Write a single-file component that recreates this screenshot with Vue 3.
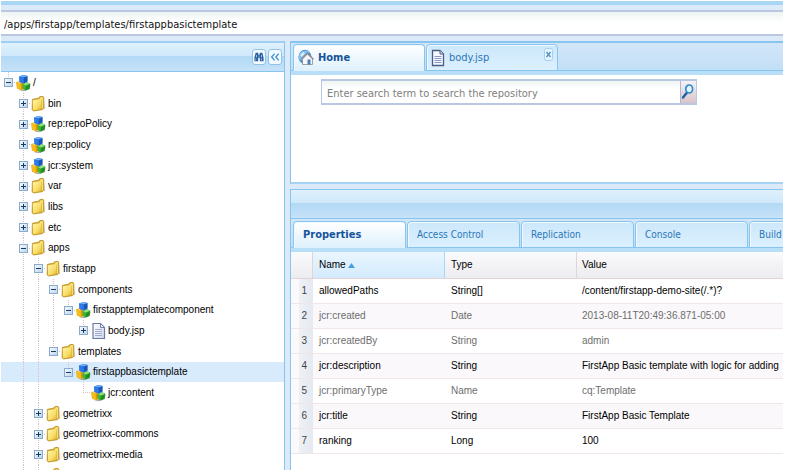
<script setup>
import { ref } from 'vue'

const path = ref('/apps/firstapp/templates/firstappbasictemplate')
const term = ref('')

// guides: columns in which a dotted line passes through the row
const nodes = [
  { name: '/', level: 0, icon: 'cubes', open: true, guides: [] },
  { name: 'bin', level: 1, icon: 'folder', open: false, guides: [1] },
  { name: 'rep:repoPolicy', level: 1, icon: 'cubes', open: false, guides: [1] },
  { name: 'rep:policy', level: 1, icon: 'cubes', open: false, guides: [1] },
  { name: 'jcr:system', level: 1, icon: 'cubes', open: false, guides: [1] },
  { name: 'var', level: 1, icon: 'folder', open: false, guides: [1] },
  { name: 'libs', level: 1, icon: 'folder', open: false, guides: [1] },
  { name: 'etc', level: 1, icon: 'folder', open: false, guides: [1] },
  { name: 'apps', level: 1, icon: 'folder', open: true, guides: [1] },
  { name: 'firstapp', level: 2, icon: 'folder', open: true, guides: [1, 2] },
  { name: 'components', level: 3, icon: 'folder', open: true, guides: [1, 2, 3] },
  { name: 'firstapptemplatecomponent', level: 4, icon: 'cubes', open: true, guides: [1, 2, 3] },
  { name: 'body.jsp', level: 5, icon: 'page', open: false, guides: [1, 2, 3] },
  { name: 'templates', level: 3, icon: 'folder', open: true, guides: [1, 2] },
  { name: 'firstappbasictemplate', level: 4, icon: 'cubes', open: true, guides: [1, 2], selected: true },
  { name: 'jcr:content', level: 5, icon: 'cubes', leaf: true, guides: [1, 2] },
  { name: 'geometrixx', level: 2, icon: 'folder', open: false, guides: [1, 2] },
  { name: 'geometrixx-commons', level: 2, icon: 'folder', open: false, guides: [1, 2] },
  { name: 'geometrixx-media', level: 2, icon: 'folder', open: false, guides: [1, 2] },
  { name: 'geometrixx-outdoors', level: 2, icon: 'folder', open: false, guides: [1, 2] },
]

const detailTabs = ['Properties', 'Access Control', 'Replication', 'Console', 'Build']

const properties = [
  { name: 'allowedPaths', type: 'String[]', value: '/content/firstapp-demo-site(/.*)?' },
  { name: 'jcr:created', type: 'Date', value: '2013-08-11T20:49:36.871-05:00', locked: true },
  { name: 'jcr:createdBy', type: 'String', value: 'admin', locked: true },
  { name: 'jcr:description', type: 'String', value: 'FirstApp Basic template with logic for adding' },
  { name: 'jcr:primaryType', type: 'Name', value: 'cq:Template', locked: true },
  { name: 'jcr:title', type: 'String', value: 'FirstApp Basic Template' },
  { name: 'ranking', type: 'Long', value: '100' },
]
</script>

<template>
  <div class="shell">
    <svg class="defs" width="0" height="0" aria-hidden="true">
      <defs>
        <linearGradient id="gold" x1="0" y1="0" x2="1" y2="1">
          <stop offset="0" stop-color="#fff6ae" />
          <stop offset="0.6" stop-color="#f8de68" />
          <stop offset="1" stop-color="#e0b030" />
        </linearGradient>
        <linearGradient id="sheet" x1="0" y1="0" x2="1" y2="1">
          <stop offset="0" stop-color="#ffffff" />
          <stop offset="1" stop-color="#cfd8ec" />
        </linearGradient>
        <symbol id="folder" viewBox="0 0 16 18">
          <path d="M3 16.5 13.5 15.5 15 14V3.5l-1 12z" fill="#777" opacity="0.5" />
          <path d="M1.5 4 8 2.8 9.2 1.2 12.8.8 13.6 2v11.5L12 15 2.5 16.5 1.2 15z" fill="#d9ae2a" stroke="#b58a1c" stroke-width="0.8" />
          <path d="M9.8 2 12.4 1.6 12.8 2.6v10.6l-1 .8V4.2L9 4.6z" fill="#f7e27c" />
          <path d="M1.9 4.9 11.2 3.6v10.6L2.2 15.6z" fill="url(#gold)" />
        </symbol>
        <symbol id="cubes" viewBox="0 0 16 18">
          <path d="M3 16.5 8 17.8 14.8 15.6 15.6 9.5 14 15z" fill="#555" opacity="0.5" />
          <path d="M.4 8 5.2 7 8 8.4v6.8L5.5 16.6 1 14.8z" fill="#d99a05" />
          <path d="M.4 8 5.2 7 8 8.4 5 9.6z" fill="#ffe27a" />
          <path d="M.4 8 5 9.6 5.4 16.4 1.1 14.6z" fill="#f5bd1c" />
          <path d="M7.2 10.2 11.4 8 15.2 9.8 14.6 14.8 10.2 17 7.4 15z" fill="#218f1d" />
          <path d="M7.2 10.2 11.4 8 15.2 9.8 10.6 11.8z" fill="#8de07e" />
          <path d="M7.2 10.2 10.6 11.8 10.2 17 7.4 15z" fill="#40b837" />
          <path d="M3.4 2 7.6.4 12.4 1.5V7.4L8.4 9.4 3.8 7.8z" fill="#1a55b8" />
          <path d="M3.4 2 7.6.4 12.4 1.5 8.2 3.2z" fill="#6fb0ff" />
          <path d="M3.4 2 8.2 3.2 8.4 9.4 3.8 7.8z" fill="#2b7bea" />
        </symbol>
        <symbol id="page" viewBox="0 0 14 18">
          <path d="M1.5 1.5H9L13 5.5v11H1.5z" fill="url(#sheet)" stroke="#6b7aa5" stroke-width="1.2" />
          <path d="M9 1.5v4h4z" fill="#e9eefa" stroke="#6b7aa5" stroke-width="0.9" />
          <path d="M3.5 7.5h7M3.5 9.5h7M3.5 11.5h7M3.5 13.5h7" stroke="#a3aed0" stroke-width="1" />
        </symbol>
      </defs>
    </svg>

    <header class="top">
      <label class="sr" for="path">Path</label>
      <input id="path" v-model="path" class="path" type="text" />
    </header>

    <div class="work">
      <aside class="explorer">
        <div class="bar">
          <button class="tool" type="button" aria-label="Search">
            <svg width="10" height="12" viewBox="0 0 12 12">
              <path d="M2 1h3v2h2V1h3l1.500 6v4H7V7H5v4H.5V7z" fill="#2c5f9e" />
              <path d="M3 3.5v3M9 3.5v3M2 8v2M9 8v2" stroke="#a9d0f2" stroke-width="1" />
              <path d="M5.5 4h1v2h-1z" fill="#8ab7e2" />
            </svg>
          </button>
          <button class="tool" type="button" aria-label="Collapse">
            <svg width="10" height="12" viewBox="0 0 12 12">
              <path d="M5.5 2 2 6l3.5 4M10.5 2 7 6l3.5 4" fill="none" stroke="#3f93cf" stroke-width="1.6" />
            </svg>
          </button>
        </div>
        <ul class="tree">
          <li v-for="node in nodes" :key="node.name" class="node" :class="{ selected: node.selected }">
            <span v-for="n in node.level" :key="n" class="cell" :class="{ line: node.guides.includes(n - 1) }"></span>
            <span
              class="cell arm"
              :class="{ stem: !node.guides.includes(node.level) }"
            >
              <button v-if="!node.leaf" class="toggle" type="button" :aria-label="node.open ? 'Collapse' : 'Expand'">
                <svg width="9" height="9" viewBox="0 0 9 9">
                  <path d="M2 4.5h5" stroke="#173d66" />
                  <path v-if="!node.open" d="M4.5 2v5" stroke="#173d66" />
                </svg>
              </button>
            </span>
            <svg class="icon" width="15" height="18"><use :href="'#' + node.icon" /></svg>
            <span class="name">{{ node.name }}</span>
          </li>
        </ul>
      </aside>

      <main class="main">
        <section class="editor">
          <nav class="tabs">
            <button class="tab active" type="button">
              <svg width="16" height="18" viewBox="0 0 16 18">
                <ellipse cx="7" cy="8" rx="6.5" ry="7.2" fill="#3c8bd6" />
                <path d="M1.5 5C4 1 9 .5 12 3.5L8 6 6 11 2 11.5C0 9 .5 7 1.5 5z" fill="#7fbdf0" />
                <path d="M2 6l3-3 2 1-3 4z" fill="#d6ecfb" />
                <path d="M4.5 15.5V10L9.5 5l5 5v5.5z" fill="#f6f6f6" stroke="#8a8a8a" stroke-width="0.8" />
                <path d="M3 10.3 9.5 3.8l6 6.5" fill="none" stroke="#8a8a8a" stroke-width="1.2" />
                <path d="M9.5 10.5h3v5h-3z" fill="#4a80bd" />
              </svg>
              <span>Home</span>
            </button>
            <div class="tab">
              <svg width="14" height="18" viewBox="0 0 14 18">
                <path d="M1.5 1.500H9L12.5 5v11.5h-11z" fill="#f5f8ff" stroke="#4d5b84" stroke-width="1.3" />
                <path d="M9 1.5V5h3.5" fill="#c7d2ea" stroke="#4d5b84" />
                <path d="M3.5 7.5h7M3.5 9.5h7M3.5 11.5h7M3.5 13.5h7" stroke="#8b99c2" />
              </svg>
              <button class="caption" type="button">body.jsp</button>
              <button class="close" type="button" aria-label="Close">
                <svg width="9" height="13" viewBox="0 0 9 13">
                  <rect x="0.5" y="0.5" width="8" height="12" rx="2" fill="#e6f4fe" stroke="#a5d0f0" />
                  <path d="M2.5 4 6.5 9M6.5 4 2.5 9" stroke="#5b96c6" stroke-width="1.5" />
                </svg>
              </button>
            </div>
          </nav>
          <form class="search" @submit.prevent>
            <label class="sr" for="term">Search</label>
            <input id="term" v-model="term" type="text" placeholder="Enter search term to search the repository" />
            <button type="submit" aria-label="Search the repository">
              <svg width="14" height="18" viewBox="0 0 14 18">
                <path d="M6 9.5 2 14.5" stroke="#1d5fa8" stroke-width="2.4" stroke-linecap="round" />
                <ellipse cx="8.2" cy="6" rx="3.4" ry="4" fill="#e4f4ff" stroke="#2b8cd0" stroke-width="1.7" />
              </svg>
            </button>
          </form>
        </section>

        <section class="details">
          <div class="bar"></div>
          <nav class="tabs">
            <button v-for="(tab, i) in detailTabs" :key="tab" class="tab" :class="{ active: i === 0 }" type="button">
              {{ tab }}
            </button>
          </nav>
          <table class="grid">
            <thead>
              <tr>
                <th class="num"></th>
                <th class="key sorted">
                  Name
                  <svg width="7" height="5" viewBox="0 0 7 5"><path d="M3.5 0 7 5H0z" fill="#4b9fdc" /></svg>
                </th>
                <th class="kind">Type</th>
                <th>Value</th>
              </tr>
            </thead>
            <tbody>
              <tr v-for="(row, i) in properties" :key="row.name" :class="{ locked: row.locked }">
                <td class="num">{{ i + 1 }}</td>
                <td>{{ row.name }}</td>
                <td>{{ row.type }}</td>
                <td>{{ row.value }}</td>
              </tr>
            </tbody>
          </table>
        </section>
      </main>
    </div>
  </div>
</template>

<style>
body {
  background: #fff;
}
</style>

<style scoped>
* {
  box-sizing: border-box;
}
.shell {
  display: flex;
  flex-direction: column;
  height: 100vh;
  border: solid #fff;
  border-width: 1px 8px 4px 1px;
  background: #dbe9f8;
  font: 10px/20px "Liberation Sans", Arial, sans-serif;
  color: #000;
  overflow: hidden;
}
.defs,
.sr {
  position: absolute;
  width: 1px;
  height: 1px;
  overflow: hidden;
  clip-path: inset(50%);
}
button {
  margin: 0;
  padding: 0;
  border: 0;
  background: none;
  font: inherit;
  color: inherit;
}
svg {
  display: block;
  flex: none;
}
.top {
  border-top: 4px solid #a9d6f5;
  padding: 5px 0;
}
.path {
  display: block;
  width: 100%;
  height: 26px;
  padding: 3px 3px 0;
  border: solid #b9c7e2;
  border-width: 2px 0;
  background: linear-gradient(#edf4f2, #fff 10px);
  font: 11px "DejaVu Sans Condensed", "Open Sans", sans-serif;
  color: #111;
  outline: 0;
}
.work {
  display: flex;
  flex: 1;
  min-height: 0;
  gap: 5px;
}
.explorer {
  display: flex;
  flex-direction: column;
  flex: 0 0 284px;
  border-top: 2px solid #9ccff2;
  border-right: 1px solid #85c5f0;
  background: #fff;
  overflow: hidden;
}
.bar {
  flex: none;
  height: 29px;
  display: flex;
  align-items: center;
  justify-content: flex-end;
  gap: 2px;
  padding-right: 2px;
  border-bottom: 1px solid #85c5f0;
  background: linear-gradient(#dff1fc, #cfe8fa 13px, #b2d9f6 13px, #c6e2f8);
}
.tool {
  display: grid;
  place-items: center;
  width: 14px;
  height: 16px;
  border: 1px solid #8fc4ea;
  border-radius: 3px;
  background: #f2f9ff;
}
.tree {
  margin: 0;
  padding: 0;
  list-style: none;
}
.node {
  display: flex;
  align-items: center;
  height: 21px;
  white-space: nowrap;
}
.node:nth-child(3n) {
  height: 20px;
}
.node.selected {
  background: #d7ebfd;
}
.cell {
  display: grid;
  place-items: center;
  flex: 0 0 15px;
  height: 100%;
  background-repeat: no-repeat;
}
.line {
  background-image: repeating-linear-gradient(#d6bfc6 0 1px, transparent 1px 2px);
  background-size: 1px 100%;
  background-position: 7px 0;
}
.arm {
  background-image:
    repeating-linear-gradient(#d6bfc6 0 1px, transparent 1px 2px),
    repeating-linear-gradient(90deg, #d6bfc6 0 1px, transparent 1px 2px);
  background-size: 1px 100%, 8px 1px;
  background-position: 7px 0, 7px 10px;
}
.stem {
  background-size: 1px 10px, 8px 1px;
}
.toggle {
  width: 9px;
  height: 9px;
  outline: 1px solid #8aabcb;
  outline-offset: -1px;
  background: linear-gradient(135deg, #fff, #b5d0e9);
}
.name {
  padding-left: 2px;
}
.main {
  display: flex;
  flex-direction: column;
  flex: 1;
  min-width: 0;
  gap: 5px;
}
.editor,
.details {
  border: solid #85c5f0;
  border-width: 2px 0 0 1px;
  background: #fff;
}
.editor {
  flex: 0 0 143px;
  border-bottom: 2px solid #a5d3f3;
}
.details {
  flex: 1;
  min-height: 0;
  border-top-width: 1px;
  overflow: hidden;
}
.tabs {
  display: flex;
  height: 32px;
  padding: 1px 2px 0;
  border-bottom: 4px solid #b9dff8;
  background: linear-gradient(#d3e6f8, #c2dff6);
  box-shadow: inset 0 -1px #85c5f0;
  font: 11px/20px "DejaVu Sans Condensed", "Open Sans", sans-serif;
  color: #2a77b8;
  overflow: hidden;
}
.tab {
  display: flex;
  align-items: center;
  flex: none;
  border: 1px solid #85c5f0;
  border-radius: 4px 4px 0 0;
  background: linear-gradient(#cce8fb, #dcf0fe);
  box-shadow: inset 1px 1px #f2faff;
  text-align: left;
}
.tab.active {
  border-bottom-color: #dff1fd;
  background: linear-gradient(#fff, #dff1fd);
  color: #15549a;
  font-weight: bold;
}
.editor .tab {
  width: 132px;
  gap: 4px;
  padding: 0 4px;
}
.editor .tabs {
  gap: 1px;
}
.caption {
  flex: 1;
  text-align: left;
}
.close {
  align-self: flex-start;
  padding-top: 3px;
}
.search {
  display: flex;
  width: 376px;
  height: 26px;
  margin: 4px 0 0 30px;
  border: 2px solid #b9c7e2;
  border-width: 2px 1px;
}
.search input {
  flex: 1;
  min-width: 0;
  padding: 3px 5px 0;
  border: 0;
  background: linear-gradient(#eef5f2, #fff 8px);
  font: 11px "DejaVu Sans Condensed", "Open Sans", sans-serif;
  outline: 0;
}
.search input::placeholder {
  color: #808080;
  opacity: 1;
}
.search button {
  width: 16px;
  border-left: 1px solid #a9b9dc;
  background: linear-gradient(#f6f2f4, #d8c4c8);
}
.details .tabs {
  height: 33px;
  gap: 1px;
  padding-top: 2px;
  font-size: 10px;
}
.details .tab {
  width: 113px;
  padding: 0 9px;
}
.details .tab.active {
  font-size: 11px;
}
.grid {
  width: 100%;
  border-collapse: separate;
  border-spacing: 0;
  table-layout: fixed;
}
th,
td {
  height: 25px;
  padding: 0 0 0 6px;
  border-bottom: 1px solid #efe6e8;
  font-weight: normal;
  text-align: left;
  white-space: nowrap;
  overflow: hidden;
}
th {
  height: 27px;
  border-right: 1px solid #e3d3d6;
  border-bottom-color: #e6d2d5;
  background: linear-gradient(#fbfafb, #ecedf0);
}
th:last-child,
td:last-child {
  border-right: 0;
  padding-left: 5px;
}
.num {
  width: 22px;
}
.key,
.kind {
  width: 132px;
}
.sorted {
  border-right-color: #a9d6f5;
  background: linear-gradient(#eaf6ff, #d3ebfd);
}
.sorted svg {
  display: inline-block;
}
tbody tr:nth-child(even) td {
  background: #faf8fa;
}
tbody td.num {
  padding: 0 6px 0 0;
  background: linear-gradient(90deg, #fbf9fa 8px, #edf2f6 8px, #e6e9f0);
  color: #444;
  text-align: right;
}
tbody tr:nth-child(even) td.num {
  background: linear-gradient(90deg, #fbf9fa 8px, #edf2f6 8px, #e6e9f0);
}
.locked td {
  color: #6e6e6e;
}
</style>
